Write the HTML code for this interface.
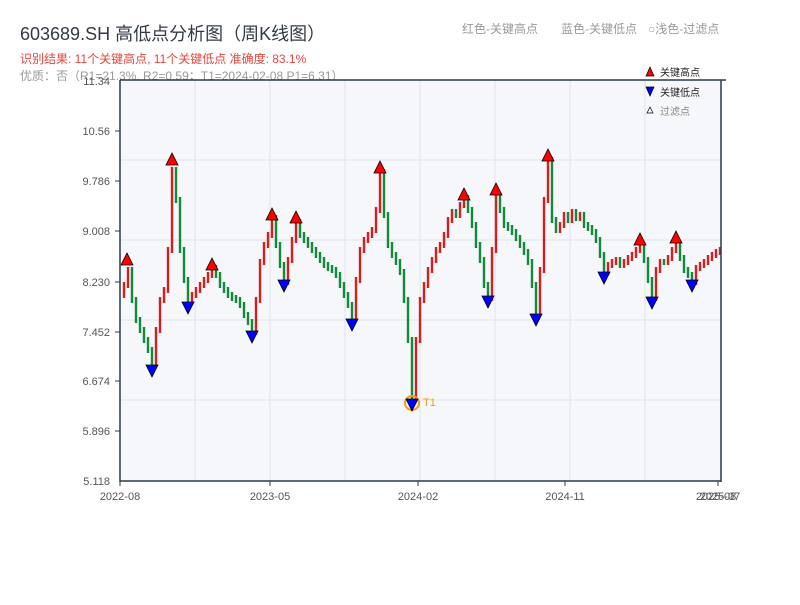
<!DOCTYPE html>
<html><head><meta charset="utf-8"><style>
body{margin:0;width:800px;height:600px;background:#fff;overflow:hidden;font-family:"Liberation Sans","Noto Sans CJK SC",sans-serif;}
</style></head><body>
<svg width="800" height="600" xmlns="http://www.w3.org/2000/svg" font-family="Liberation Sans, Noto Sans CJK SC, sans-serif">
<text x="20" y="40" font-size="18" fill="#333a44">603689.SH 高低点分析图（周K线图）</text>
<text x="20" y="63" font-size="12" fill="#e8463c">识别结果: 11个关键高点, 11个关键低点  准确度: 83.1%</text>
<text x="20" y="80" font-size="12" fill="#999">优质：否（R1=21.3%, R2=0.59；T1=2024-02-08 P1=6.31）</text>
<text x="462" y="33" font-size="12" fill="#999">红色-关键高点</text>
<text x="561" y="33" font-size="12" fill="#999">蓝色-关键低点</text>
<text x="648" y="33" font-size="12" fill="#999">○浅色-过滤点</text>
<rect x="120" y="80" width="601" height="401" fill="#f5f7fa"/>
<g stroke="#e0e3e8" stroke-width="1">
<line x1="120" y1="160" x2="721" y2="160"/><line x1="120" y1="240" x2="721" y2="240"/><line x1="120" y1="320" x2="721" y2="320"/><line x1="120" y1="400" x2="721" y2="400"/>
<line x1="195" y1="80" x2="195" y2="481"/><line x1="270" y1="80" x2="270" y2="481"/><line x1="345" y1="80" x2="345" y2="481"/><line x1="420" y1="80" x2="420" y2="481"/><line x1="495" y1="80" x2="495" y2="481"/><line x1="570" y1="80" x2="570" y2="481"/><line x1="645" y1="80" x2="645" y2="481"/>
</g>
<path stroke="#d42020" stroke-width="2.4" fill="none" d="M124 282V298M128 267V288M156 327V365M160 297V333M164 287V303M168 247V293M172 167V253M192 292V305M196 287V298M200 282V293M204 277V288M208 272V283M212 265V278M256 297V335M260 259V303M264 242V265M268 232V248M272 215V238M288 257V285M292 237V263M296 219V243M356 277V321M360 247V283M364 237V253M368 232V243M372 227V238M376 207V233M380 169V213M416 337V401M420 297V343M424 282V303M428 267V288M432 257V273M436 247V263M440 242V253M444 232V248M448 217V238M452 209V223M460 202V218M464 195V208M492 247V301M496 192V253M540 267V315M544 197V273M548 157V203M560 222V233M564 212V228M572 209V223M580 212V221M608 262V275M612 259V268M616 257V265M624 259V268M628 255V265M632 252V261M636 247V258M640 242V253M656 267V301M660 259V273M668 255V265M672 247V261M676 240V253M696 265V285M700 262V271M704 259V268M708 255V265M712 252V261M716 249V258M720 247V255"/>
<path stroke="#138a3a" stroke-width="2.4" fill="none" d="M132 267V303M136 297V323M140 317V333M144 327V343M148 337V353M152 347V365M176 167V203M180 197V253M184 247V283M188 277V305M216 265V278M220 272V288M224 282V293M228 287V298M232 292V301M236 295V303M240 297V308M244 302V318M248 312V325M252 319V335M276 215V248M280 242V268M284 262V285M300 219V238M304 232V243M308 237V248M312 242V253M316 247V258M320 252V263M324 257V268M328 262V271M332 265V273M336 267V278M340 272V288M344 282V298M348 292V308M352 302V321M384 169V218M388 212V248M392 242V258M396 252V265M400 259V275M404 269V303M408 297V343M412 337V401M456 209V218M468 195V213M472 207V228M476 222V248M480 242V263M484 257V288M488 282V301M500 192V213M504 207V228M508 222V231M512 225V235M516 229V241M520 235V248M524 242V255M528 249V265M532 259V288M536 282V315M552 157V223M556 217V233M568 212V223M576 209V221M584 212V228M588 222V231M592 225V235M596 229V243M600 237V258M604 252V275M620 257V268M644 242V263M648 257V283M652 277V301M664 259V265M680 240V261M684 255V273M688 267V278M692 272V285"/>
<circle cx="412" cy="403" r="7" fill="none" stroke="#f39c12" stroke-width="2"/>
<text x="423" y="406" font-size="11" fill="#f39c12">T1</text>
<g fill="red" stroke="#000" stroke-width="0.8">
<polygon points="127,253 121,265 133,265"/><polygon points="172,153 166,165 178,165"/><polygon points="212,258 206,270 218,270"/><polygon points="272,208 266,220 278,220"/><polygon points="296,211 290,223 302,223"/><polygon points="380,161 374,173 386,173"/><polygon points="464,188 458,200 470,200"/><polygon points="496,183 490,195 502,195"/><polygon points="548,149 542,161 554,161"/><polygon points="640,233 634,245 646,245"/><polygon points="676,231 670,243 682,243"/>
</g>
<g fill="blue" stroke="#000" stroke-width="0.8">
<polygon points="146,365 158,365 152,377"/><polygon points="182,302 194,302 188,314"/><polygon points="246,331 258,331 252,343"/><polygon points="278,280 290,280 284,292"/><polygon points="346,319 358,319 352,331"/><polygon points="406,399 418,399 412,411"/><polygon points="482,296 494,296 488,308"/><polygon points="530,314 542,314 536,326"/><polygon points="598,272 610,272 604,284"/><polygon points="646,297 658,297 652,309"/><polygon points="686,280 698,280 692,292"/>
</g>
<g stroke="#2d3a4a" stroke-width="1.5" fill="none">
<line x1="120" y1="80" x2="120" y2="482"/><line x1="120" y1="481" x2="721" y2="481"/><line x1="120" y1="80" x2="726" y2="80"/><line x1="721" y1="80" x2="721" y2="482"/>
</g>
<g font-size="11" fill="#555" text-anchor="end">
<text x="110" y="85">11.34</text><text x="110" y="135">10.56</text><text x="110" y="185">9.786</text><text x="110" y="235">9.008</text><text x="110" y="286">8.230</text><text x="110" y="336">7.452</text><text x="110" y="385">6.674</text><text x="110" y="435">5.896</text><text x="110" y="485">5.118</text>
</g>
<g stroke="#2d3a4a"><line x1="115" y1="131" x2="120" y2="131"/><line x1="115" y1="181" x2="120" y2="181"/><line x1="115" y1="231" x2="120" y2="231"/><line x1="115" y1="282" x2="120" y2="282"/><line x1="115" y1="332" x2="120" y2="332"/><line x1="115" y1="381" x2="120" y2="381"/><line x1="115" y1="431" x2="120" y2="431"/>
<line x1="120" y1="481" x2="120" y2="486"/><line x1="270" y1="481" x2="270" y2="486"/><line x1="418" y1="481" x2="418" y2="486"/><line x1="565" y1="481" x2="565" y2="486"/><line x1="718" y1="481" x2="718" y2="486"/></g>
<g font-size="11" fill="#555" text-anchor="middle">
<text x="120" y="500">2022-08</text><text x="270" y="500">2023-05</text><text x="418" y="500">2024-02</text><text x="565" y="500">2024-11</text><text x="716" y="500">2025-08</text><text x="720" y="500">2025-07</text>
</g>
<g font-size="10">
<polygon points="650,67 646,76 654,76" fill="red" stroke="#000" stroke-width="0.7"/><text x="660" y="76" fill="#222">关键高点</text>
<polygon points="646,87 654,87 650,96" fill="blue" stroke="#000" stroke-width="0.7"/><text x="660" y="96" fill="#222">关键低点</text>
<polygon points="650,107 647,113 653,113" fill="#fff" stroke="#000" stroke-width="0.7"/><text x="660" y="115" fill="#888">过滤点</text>
</g>
</svg>
</body></html>
